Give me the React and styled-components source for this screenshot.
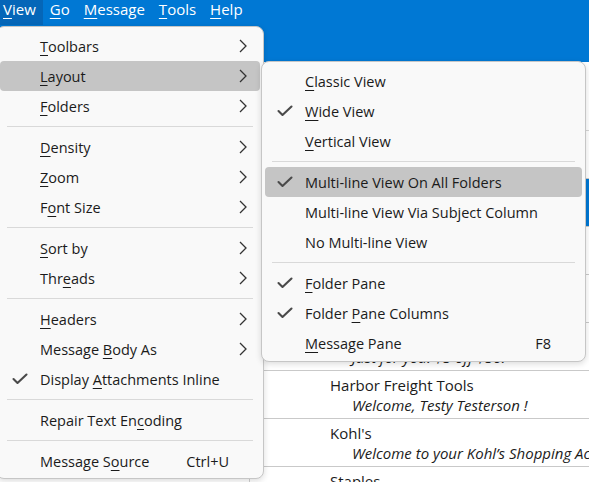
import React from "react";
import styled, { createGlobalStyle } from "styled-components";

const GlobalStyle = createGlobalStyle`
  html, body { margin: 0; padding: 0; }
  body {
    font-family: "Open Sans", "Noto Sans", "Liberation Sans", sans-serif;
    overflow: hidden;
    background: #ffffff;
  }
`;

const Window = styled.div`
  position: relative;
  width: 589px;
  height: 482px;
  overflow: hidden;
  background: #ffffff;
  display: flex;
  flex-direction: column;
`;

const MenuBar = styled.div`
  display: flex;
  flex: none;
  height: 25px;
  margin-left: -4px;
  background: #0078d4;
`;

const BarItem = styled.div`
  padding: 0 7px;
  height: 25px;
  line-height: 19px;
  font-size: 15px;
  color: #ffffff;
  background: ${(p) => (p.$open ? "#0566b8" : "transparent")};
`;

const Header = styled.div`
  flex: none;
  height: 37px;
  background: #0078d4;
`;

const Body = styled.div`
  flex: 1;
  display: flex;
  min-height: 0;
  overflow: hidden;
`;

const FolderPane = styled.div`
  flex: none;
  width: 249px;
  background: #ffffff;
  border-right: 1px solid #d0d0d0;
`;

const ThreadPane = styled.div`
  flex: 1;
  min-width: 0;
  display: flex;
  flex-direction: column;
  overflow: hidden;
`;

const ThreadToolbar = styled.div`
  flex: none;
  height: 68px;
  border-bottom: 1px solid #d6d6d6;
`;

const Row = styled.div`
  flex: none;
  height: 47px;
  border-bottom: 1px solid #c9c9c9;
  display: flex;
  flex-direction: column;
  padding-left: 80px;
  background: ${(p) => (p.$selected ? "#0078d4" : "#ffffff")};
  color: ${(p) => (p.$selected ? "#ffffff" : "#1b1b1b")};
  font-size: 15px;
`;

const Sender = styled.div`
  height: 22px;
  line-height: 28px;
  white-space: nowrap;
`;

const Subject = styled.div`
  padding-left: 22px;
  height: 23px;
  line-height: 24px;
  font-style: italic;
  white-space: nowrap;
`;

const Menu = styled.div`
  position: absolute;
  left: ${(p) => p.$left}px;
  top: ${(p) => p.$top}px;
  width: ${(p) => p.$width}px;
  box-sizing: border-box;
  padding: 4px 0 ${(p) => p.$padBottom}px;
  background: #f9f9f9;
  border: 1px solid #c6c6c6;
  border-radius: 8px;
  box-shadow: 0 2px 6px rgba(0, 0, 0, 0.14);
  z-index: ${(p) => p.$z};
`;

const Item = styled.div`
  display: flex;
  align-items: center;
  height: 30px;
  margin: 0 3px;
  padding-right: 13px;
  border-radius: 4px;
  background: ${(p) => (p.$active ? "#c5c5c5" : "transparent")};
  font-size: 14.5px;
  color: #1b1b1b;
  white-space: nowrap;
`;

const CheckSlot = styled.div`
  width: 40px;
  padding-left: 12px;
  box-sizing: border-box;
  display: flex;
  align-items: center;
`;

const Label = styled.div`
  flex: 1;
`;

const Key = styled.span`
  text-decoration: underline;
  text-underline-offset: 3px;
  text-decoration-thickness: 1px;
`;

const Accel = styled.div`
  margin-right: 18px;
`;

const Separator = styled.div`
  height: 1px;
  margin: 5px 10px;
  background: #d9d9d9;
`;

const Check = () => (
  <svg width="16" height="12" viewBox="0 0 16 12">
    <polyline points="1.5,6 5.5,10 14.5,1.5" fill="none" stroke="#4a4a4a" strokeWidth="2.1" strokeLinejoin="round" strokeLinecap="round" />
  </svg>
);

const Chevron = () => (
  <svg width="8" height="14" viewBox="0 0 8 14">
    <polyline points="1,1 7,7 1,13" fill="none" stroke="#333333" strokeWidth="1.3" />
  </svg>
);

const mainItems = [
  { l: ["", "T", "oolbars"], sub: true },
  { l: ["", "L", "ayout"], sub: true, active: true },
  { l: ["", "F", "olders"], sub: true },
  { sep: true },
  { l: ["", "D", "ensity"], sub: true },
  { l: ["", "Z", "oom"], sub: true },
  { l: ["F", "o", "nt Size"], sub: true },
  { sep: true },
  { l: ["", "S", "ort by"], sub: true },
  { l: ["Thr", "e", "ads"], sub: true },
  { sep: true },
  { l: ["", "H", "eaders"], sub: true },
  { l: ["Message ", "B", "ody As"], sub: true },
  { l: ["Display ", "A", "ttachments Inline"], checked: true },
  { sep: true },
  { l: ["Repair Text En", "c", "oding"] },
  { sep: true },
  { l: ["Message S", "o", "urce"], accel: "Ctrl+U" },
];

const layoutItems = [
  { l: ["", "C", "lassic View"] },
  { l: ["", "W", "ide View"], checked: true },
  { l: ["", "V", "ertical View"] },
  { sep: true },
  { l: ["Multi-line View On All Folders", "", ""], checked: true, active: true },
  { l: ["Multi-line View Via Subject Column", "", ""] },
  { l: ["No Multi-line View", "", ""] },
  { sep: true },
  { l: ["", "F", "older Pane"], checked: true },
  { l: ["Folder ", "P", "ane Columns"], checked: true },
  { l: ["", "M", "essage Pane"], accel: "F8" },
];

const MenuItems = ({ items }) =>
  items.map((it, i) =>
    it.sep ? (
      <Separator key={i} />
    ) : (
      <Item key={i} $active={it.active}>
        <CheckSlot>{it.checked && <Check />}</CheckSlot>
        <Label>
          {it.l[0]}
          {it.l[1] && <Key>{it.l[1]}</Key>}
          {it.l[2]}
        </Label>
        {it.accel && <Accel>{it.accel}</Accel>}
        {it.sub && <Chevron />}
      </Item>
    )
  );

const rows = [
  { s: "", j: "" },
  { s: "", j: "", selected: true },
  { s: "", j: "" },
  { s: "", j: "" },
  { s: "", j: "Just for you! $5 off $50!" },
  { s: "Harbor Freight Tools", j: "Welcome, Testy Testerson !" },
  { s: "Kohl's", j: "Welcome to your Kohl’s Shopping Account" },
  { s: "Staples", j: "" },
];

export default function App() {
  return (
    <Window>
      <GlobalStyle />
      <MenuBar>
        <BarItem $open>
          <Key>V</Key>iew
        </BarItem>
        <BarItem>
          <Key>G</Key>o
        </BarItem>
        <BarItem>
          <Key>M</Key>essage
        </BarItem>
        <BarItem>
          <Key>T</Key>ools
        </BarItem>
        <BarItem>
          <Key>H</Key>elp
        </BarItem>
      </MenuBar>
      <Header />
      <Body>
        <FolderPane />
        <ThreadPane>
          <ThreadToolbar />
          {rows.map((r, i) => (
            <Row key={i} $selected={r.selected}>
              <Sender>{r.s}</Sender>
              <Subject>{r.j}</Subject>
            </Row>
          ))}
        </ThreadPane>
      </Body>
      <Menu $left={-4} $top={26} $width={268} $padBottom={2} $z={10}>
        <MenuItems items={mainItems} />
      </Menu>
      <Menu $left={261} $top={61} $width={325} $padBottom={3} $z={11}>
        <MenuItems items={layoutItems} />
      </Menu>
    </Window>
  );
}
